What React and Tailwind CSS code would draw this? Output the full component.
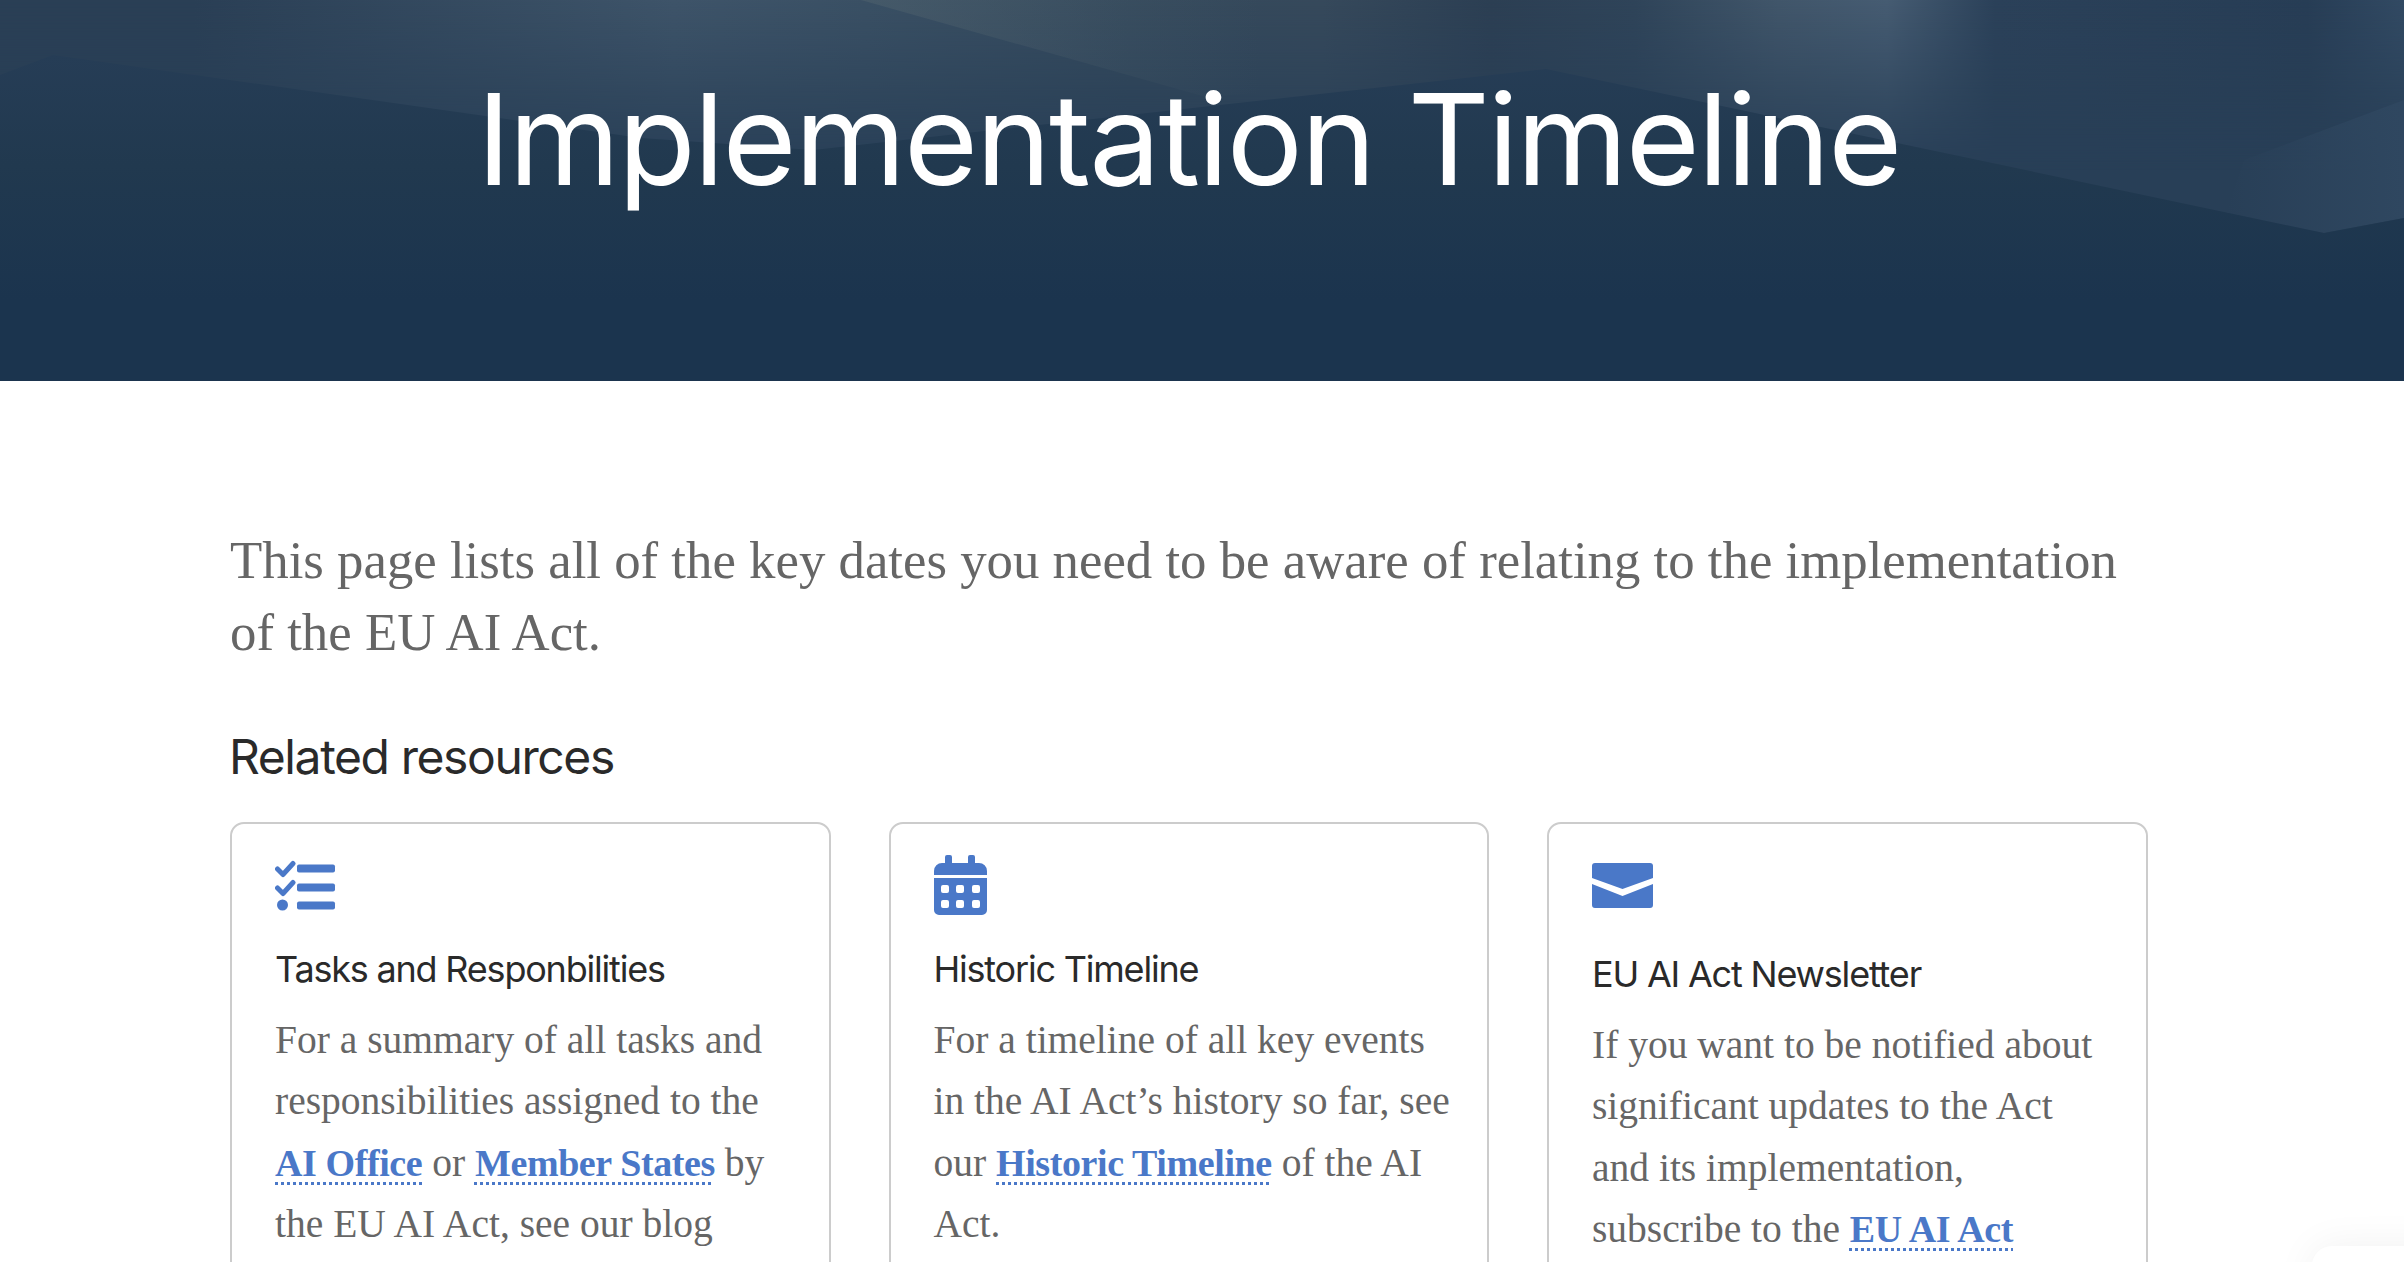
import React from "react";

const HeroArt = () => (
  <svg className="absolute inset-0 w-full h-full" viewBox="0 0 2404 381" preserveAspectRatio="none" aria-hidden="true">
    <defs>
      <linearGradient id="sheen" x1="0" y1="0" x2="1" y2="0">
        <stop offset="0" stopColor="#2a3f55" />
        <stop offset="0.08" stopColor="#2a3f55" />
        <stop offset="0.28" stopColor="#3e5469" />
        <stop offset="0.36" stopColor="#3a5064" />
        <stop offset="0.47" stopColor="#34495c" />
        <stop offset="0.55" stopColor="#36495b" />
        <stop offset="0.62" stopColor="#2c3f53" />
        <stop offset="0.68" stopColor="#2f4459" />
        <stop offset="0.74" stopColor="#41566a" />
        <stop offset="0.785" stopColor="#465c72" />
        <stop offset="0.83" stopColor="#2b4159" />
        <stop offset="0.96" stopColor="#273d55" />
        <stop offset="1" stopColor="#324a63" />
      </linearGradient>
      <linearGradient id="sheenFade" x1="0" y1="0" x2="0" y2="170" gradientUnits="userSpaceOnUse">
        <stop offset="0" stopColor="#ffffff" />
        <stop offset="0.4" stopColor="#ffffff" stopOpacity="0.6" />
        <stop offset="1" stopColor="#ffffff" stopOpacity="0" />
      </linearGradient>
      <mask id="sheenMask">
        <rect width="2404" height="170" fill="url(#sheenFade)" />
      </mask>
      <linearGradient id="wedge" x1="861" y1="0" x2="1260" y2="0" gradientUnits="userSpaceOnUse">
        <stop offset="0" stopColor="#53656f" stopOpacity="0.45" />
        <stop offset="1" stopColor="#53656f" stopOpacity="0" />
      </linearGradient>
      <linearGradient id="facet" x1="2225" y1="0" x2="2404" y2="0" gradientUnits="userSpaceOnUse">
        <stop offset="0" stopColor="#2f4760" stopOpacity="0" />
        <stop offset="1" stopColor="#2f4760" />
      </linearGradient>
      <linearGradient id="lower" x1="0" y1="55" x2="0" y2="300" gradientUnits="userSpaceOnUse">
        <stop offset="0" stopColor="#263d56" />
        <stop offset="0.45" stopColor="#21394f" />
        <stop offset="1" stopColor="#1b344e" />
      </linearGradient>
    </defs>
    <rect width="2404" height="381" fill="#283f57" />
    <rect width="2404" height="170" fill="url(#sheen)" mask="url(#sheenMask)" />
    <polygon points="861,0 1206,97 1500,75 1500,0" fill="url(#wedge)" />
    <polygon points="2404,100 2244,160 2225,216 2324,233 2404,218" fill="url(#facet)" />
    <polygon
      points="0,75 53,55 641,138 813,150 1546,69 2324,233 2404,218 2404,381 0,381"
      fill="url(#lower)"
    />
  </svg>
);

const TasksIcon = () => (
  <svg width="62" height="52" viewBox="0 0 62 52" fill="#4a78c8" aria-hidden="true">
    <path d="M2.500 9l5.500 5.500L18 3.500" fill="none" stroke="#4a78c8" strokeWidth="5" strokeLinecap="round" strokeLinejoin="round" />
    <path d="M2.500 28l5.500 5.500L18 22.500" fill="none" stroke="#4a78c8" strokeWidth="5" strokeLinecap="round" strokeLinejoin="round" />
    <circle cx="7.500" cy="45" r="5.500" />
    <rect x="22" y="4.500" width="38" height="8" rx="2" />
    <rect x="22" y="23.500" width="38" height="8" rx="2" />
    <rect x="22" y="41.500" width="38" height="8" rx="2" />
  </svg>
);

const CalendarIcon = () => (
  <svg width="53" height="60" viewBox="0 0 53 60" fill="#4a78c8" aria-hidden="true">
    <path d="M11 2a2 2 0 0 1 2-2h3a2 2 0 0 1 2 2v6h16V2a2 2 0 0 1 2-2h3a2 2 0 0 1 2 2v6h4a8 8 0 0 1 8 8v4H0v-4a8 8 0 0 1 8-8h3z" />
    <path
      fillRule="evenodd"
      d="M0 23h53v32a5 5 0 0 1-5 5H5a5 5 0 0 1-5-5zM9 30a2 2 0 0 0-2 2v4a2 2 0 0 0 2 2h4a2 2 0 0 0 2-2v-4a2 2 0 0 0-2-2zM24 30a2 2 0 0 0-2 2v4a2 2 0 0 0 2 2h4a2 2 0 0 0 2-2v-4a2 2 0 0 0-2-2zM40 30a2 2 0 0 0-2 2v4a2 2 0 0 0 2 2h4a2 2 0 0 0 2-2v-4a2 2 0 0 0-2-2zM9 45a2 2 0 0 0-2 2v4a2 2 0 0 0 2 2h4a2 2 0 0 0 2-2v-4a2 2 0 0 0-2-2zM24 45a2 2 0 0 0-2 2v4a2 2 0 0 0 2 2h4a2 2 0 0 0 2-2v-4a2 2 0 0 0-2-2zM40 45a2 2 0 0 0-2 2v4a2 2 0 0 0 2 2h4a2 2 0 0 0 2-2v-4a2 2 0 0 0-2-2z"
    />
  </svg>
);

const MailIcon = () => (
  <svg width="61" height="45" viewBox="0 0 61 45" fill="#4a78c8" aria-hidden="true">
    <path d="M3 0h55a3 3 0 0 1 3 3v12L30.500 26 0 15V3a3 3 0 0 1 3-3z" />
    <path d="M0 21l30.500 12L61 21v21a3 3 0 0 1-3 3H3a3 3 0 0 1-3-3z" />
  </svg>
);

const A = ({ children }) => (
  <a
    href="#"
    className="text-[38px] text-[#4a78c8] font-semibold tracking-[-0.4px] underline decoration-dotted decoration-[3px] underline-offset-[6px]"
  >
    {children}
  </a>
);

const Card = ({ icon, iconBox, title, children }) => (
  <div className="w-[600.500px] h-[600px] shrink-0 border-2 border-[#cccccc] rounded-[14px] pl-[43px] pr-[20px] pt-[31px]">
    <div className={iconBox}>{icon}</div>
    <h3 className="font-['Inter',sans-serif] text-[36px] leading-[46px] tracking-[-1.2px] text-[#2a2a2a]">
      {title}
    </h3>
    <p className="mt-[18px] font-['Liberation_Serif',serif] text-[39.500px] leading-[61.300px] text-[#666666]">
      {children}
    </p>
  </div>
);

export default function App() {
  return (
    <div className="relative h-[1262px] overflow-hidden bg-white">
      <header className="relative h-[381px] overflow-hidden bg-[#1b344e]">
        <HeroArt />
        <h1 className="relative pt-[74px] pr-[27px] text-center font-['Inter',sans-serif] text-[127px] leading-[130px] tracking-[-2px] text-white">
          Implementation Timeline
        </h1>
      </header>
      <main className="px-[230px] pt-[143px]">
        <p className="w-[1910px] font-['Liberation_Serif',serif] text-[52.800px] leading-[72px] text-[#666666]">
          This page lists all of the key dates you need to be aware of relating to the implementation of the EU AI Act.
        </p>
        <h2 className="mt-[59px] -ml-[1px] font-['Inter',sans-serif] text-[48px] leading-[60px] tracking-[-1.400px] text-[#2a2a2a]">
          Related resources
        </h2>
        <div className="mt-[35px] flex gap-[58px]">
          <Card icon={<div className="pt-[5px]"><TasksIcon /></div>} iconBox="h-[91px]" title="Tasks and Responbilities">
            For a summary of all tasks and
            <br />
            responsibilities assigned to the
            <br />
            <A>AI Office</A> or <A>Member States</A> by
            <br />
            the EU AI Act, see our blog
          </Card>
          <Card icon={<CalendarIcon />} iconBox="h-[91px]" title="Historic Timeline">
            For a timeline of all key events
            <br />
            in the AI Act’s history so far, see
            <br />
            our <A>Historic Timeline</A> of the AI
            <br />
            Act.
          </Card>
          <Card icon={<div className="pt-[8px]"><MailIcon /></div>} iconBox="h-[96px]" title="EU AI Act Newsletter">
            If you want to be notified about
            <br />
            significant updates to the Act
            <br />
            and its implementation,
            <br />
            subscribe to the <A>EU AI Act</A>
          </Card>
        </div>
      </main>
      <div className="absolute left-[2312px] top-[1246px] w-[160px] h-[80px] rounded-[20px] bg-white shadow-[0_0_40px_rgba(0,0,0,0.06)]" />
    </div>
  );
}
